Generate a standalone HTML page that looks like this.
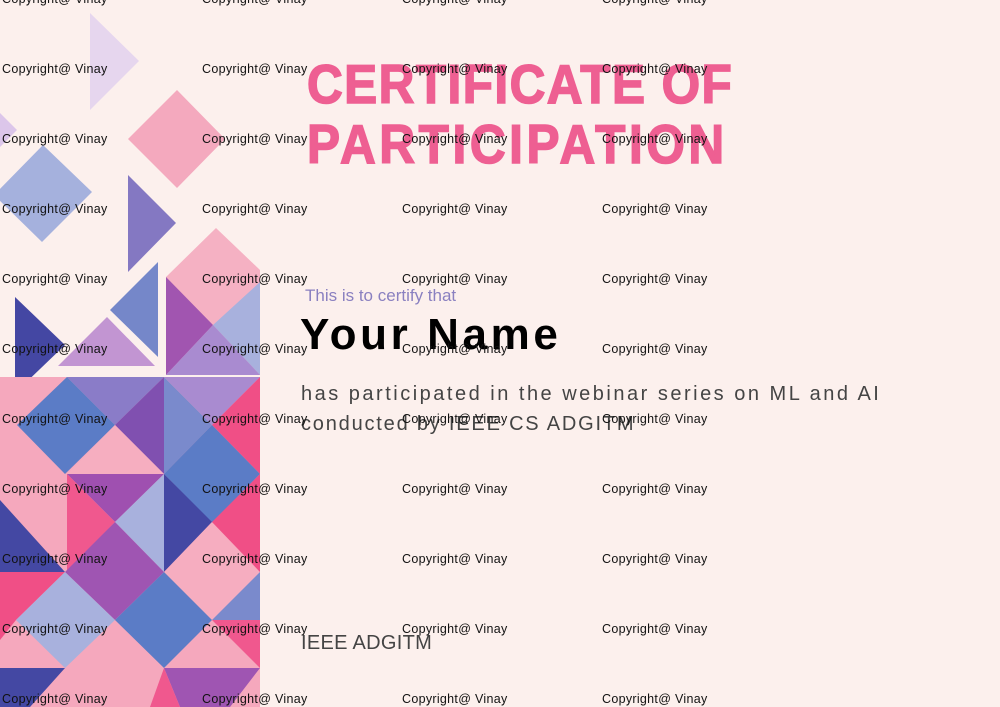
<!DOCTYPE html>
<html><head><meta charset="utf-8"><style>
*{margin:0;padding:0}
body{width:1000px;height:707px;overflow:hidden;background:#fcf0ed;position:relative;font-family:"Liberation Sans",sans-serif}
svg.bg{position:absolute;left:0;top:0}
.t{position:absolute;left:307px;color:#ee5f92;font-weight:bold;font-size:55px;letter-spacing:1px;transform-origin:0 0;white-space:nowrap;line-height:1;-webkit-text-stroke:1.6px #ee5f92}
.wm{position:absolute;font-size:12.5px;letter-spacing:0.3px;color:#111;white-space:nowrap;line-height:1}
.p{position:absolute;white-space:nowrap;line-height:1}
</style></head><body>
<svg class="bg" width="1000" height="707" viewBox="0 0 1000 707">
<polygon points="90,13 139,61 90,110" fill="#e6d6ee"/>
<polygon points="0,113 17,130 0,147" fill="#dcc6ea"/>
<polygon points="128,139 177,90 225,139 177,188" fill="#f4a9be"/>
<polygon points="43,145 92,192 42,242 -6,195" fill="#a5b1dd"/>
<polygon points="128,175 176,223 128,272" fill="#8478c2"/>
<polygon points="166,277 216,228 260,270 260,375 166,375" fill="#f5b1c3"/>
<polygon points="260,282 213,325 260,375" fill="#a8b1dd"/>
<polygon points="166,277 213,325 166,375" fill="#a155b0"/>
<polygon points="213,325 260,375 166,375" fill="#a98bd0"/>
<polygon points="158,262 110,310 158,357" fill="#7587c9"/>
<polygon points="15,297 65,345 15,393" fill="#4447a3"/>
<polygon points="107,317 58,366 155,366" fill="#c295d2"/>
<rect x="0" y="377" width="260" height="330" fill="#f5a8bd"/>
<polygon points="67,377 164,377 115,425" fill="#8a7cc8"/>
<polygon points="164,377 115,425 164,474" fill="#8050b0"/>
<polygon points="67,377 115,425 65,474 17,425" fill="#5b7cc6"/>
<polygon points="164,377 164,474 212,425" fill="#7a8acc"/>
<polygon points="164,377 260,377 212,425" fill="#a98bd0"/>
<polygon points="260,377 212,425 260,474" fill="#f04f86"/>
<polygon points="212,425 260,474 212,523 164,474" fill="#5b7cc6"/>
<polygon points="115,425 67,474 164,474" fill="#f6aec0"/>
<polygon points="67,474 164,474 115,522" fill="#9f50b0"/>
<polygon points="67,474 115,522 67,572" fill="#f0588e"/>
<polygon points="164,474 115,522 164,572" fill="#a8b1dd"/>
<polygon points="164,474 212,522 164,572" fill="#4448a3"/>
<polygon points="212,522 260,572 212,620 164,572" fill="#f6adc0"/>
<polygon points="212,522 260,474 260,572" fill="#f04f86"/>
<polygon points="0,500 65,572 0,572" fill="#4448a3"/>
<polygon points="0,572 65,572 16,620 0,620" fill="#f04f86"/>
<polygon points="115,522 164,572 115,620 65,572" fill="#9f55b2"/>
<polygon points="65,572 115,620 65,668 16,620" fill="#a8b1dd"/>
<polygon points="164,572 212,620 164,668 115,620" fill="#5b7cc6"/>
<polygon points="212,620 260,572 260,620" fill="#7a8acc"/>
<polygon points="212,620 260,620 260,668" fill="#f0588e"/>
<polygon points="164,668 260,668 230,707 180,707" fill="#9f55b2"/>
<polygon points="164,668 180,707 150,707" fill="#f0588e"/>
<polygon points="0,668 65,668 30,707 0,707" fill="#4448a3"/>
<polygon points="0,620 16,620 0,640" fill="#f04f86"/>
</svg>
<div class="t" style="top:57px;transform:scaleX(0.9);letter-spacing:1.6px">CERTIFICATE OF</div>
<div class="t" style="top:117px;transform:scaleX(0.9);letter-spacing:4px">PARTICIPATION</div>
<div class="p" style="left:305px;top:287px;font-size:17px;color:#8a80c0">This is to certify that</div>
<div class="p" style="left:300px;top:313px;font-size:44px;font-weight:bold;letter-spacing:3.6px;color:#000">Your Name</div>
<div class="p" style="left:301px;top:384px;font-size:20px;letter-spacing:2.5px;color:#444">has participated in the webinar series on ML and AI</div>
<div class="p" style="left:301px;top:414px;font-size:20px;letter-spacing:1.8px;color:#444">conducted by IEEE CS ADGITM</div>
<div class="p" style="left:301px;top:633px;font-size:20px;letter-spacing:0.3px;color:#444">IEEE ADGITM</div>
<div id="wm"></div>
<script>
var h='';for(var r=0;r<11;r++){for(var c=0;c<4;c++){h+='<div class="wm" style="left:'+(2+200*c)+'px;top:'+(-7+70*r)+'px">Copyright@ Vinay</div>';}}
document.getElementById('wm').innerHTML=h;
</script>
</body></html>
